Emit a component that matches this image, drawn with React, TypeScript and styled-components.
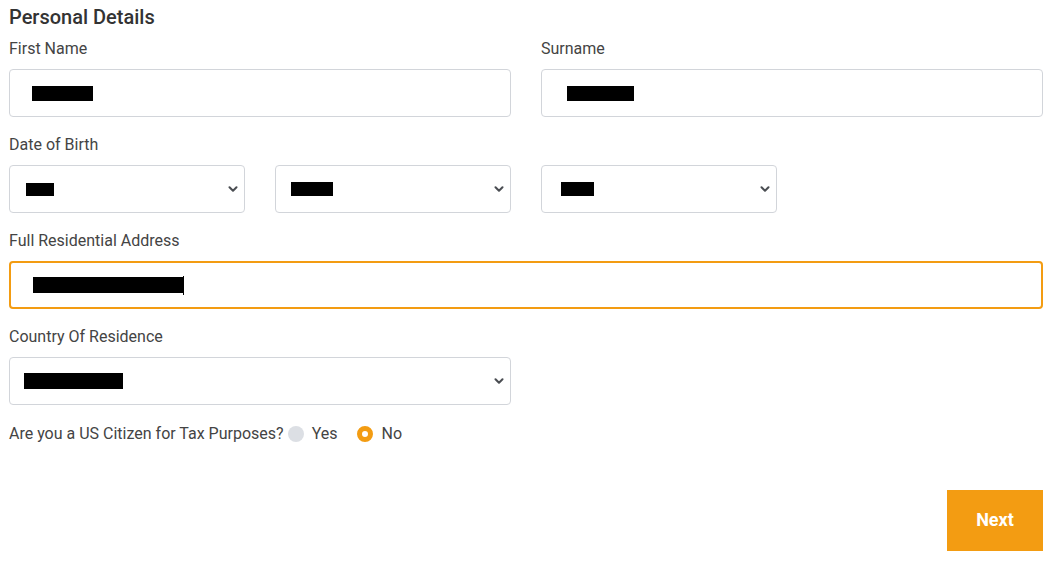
import React from "react";
import styled, { createGlobalStyle } from "styled-components";

const GlobalStyle = createGlobalStyle`
  html, body { margin: 0; padding: 0; background: #ffffff; }
  body { font-family: Roboto, "Liberation Sans", Arial, sans-serif; }
  * { box-sizing: border-box; }
`;

const Page = styled.div`
  padding: 5px 16px 0 9px;
  width: 1059px;
`;

const Heading = styled.h2`
  margin: 0 0 9px;
  font-size: 20px;
  line-height: 24px;
  font-weight: 500;
  color: #333333;
`;

const Row = styled.div`
  display: grid;
  grid-template-columns: repeat(12, 1fr);
  column-gap: 30px;
  width: 1034px;
`;

const Group = styled.div<{ $span: number; $flush?: boolean; $gap?: number }>`
  grid-column: span ${(p) => p.$span};
  margin-bottom: ${(p) => (p.$flush ? 0 : p.$gap ?? 17)}px;
`;

const Label = styled.label`
  display: block;
  font-size: 16px;
  line-height: 22px;
  color: #444444;
  margin-bottom: 9px;
`;

const Field = styled.div<{ $focus?: boolean }>`
  position: relative;
  display: flex;
  align-items: center;
  height: 48px;
  border: ${(p) => (p.$focus ? "2px solid #f39c12" : "1px solid #d2d5da")};
  border-radius: 4px;
  background: #ffffff;
  padding-left: ${(p) => (p.$focus ? "0" : "1px")};
`;

const Redaction = styled.span<{ $left: number; $w: number; $h: number }>`
  display: block;
  margin-left: ${(p) => p.$left}px;
  width: ${(p) => p.$w}px;
  height: ${(p) => p.$h}px;
  background: #000000;
`;

const Caret = styled.span`
  display: block;
  width: 1px;
  height: 19px;
  background: #000000;
`;

const Chevron = styled.svg`
  position: absolute;
  right: 6px;
  top: 50%;
  margin-top: -3px;
  width: 10px;
  height: 6px;
`;

const SelectArrow = () => (
  <Chevron viewBox="0 0 10 6">
    <path d="M1.5 1.2 L5 4.8 L8.5 1.2" fill="none" stroke="#4a4d52" strokeWidth="2" strokeLinecap="round" strokeLinejoin="round" />
  </Chevron>
);

const RadioRow = styled.div`
  display: flex;
  align-items: center;
  font-size: 16px;
  line-height: 22px;
  color: #444444;
`;

const Question = styled.span`
  margin-right: 4px;
`;

const RadioDot = styled.span<{ $checked?: boolean }>`
  display: inline-block;
  width: 16px;
  height: 16px;
  border-radius: 50%;
  box-sizing: border-box;
  background: ${(p) => (p.$checked ? "#ffffff" : "#dcdfe4")};
  border: ${(p) => (p.$checked ? "5px solid #f39c12" : "none")};
  margin-right: 8px;
`;

const RadioOption = styled.span`
  display: inline-flex;
  align-items: center;
  margin-right: 20px;
`;

const Actions = styled.div`
  display: flex;
  justify-content: flex-end;
  width: 1034px;
  margin-top: 45px;
`;

const NextButton = styled.button`
  width: 96px;
  height: 61px;
  border: none;
  border-radius: 0;
  padding: 0 0 2px;
  background: #f39c12;
  color: #ffffff;
  font-family: Roboto, "Liberation Sans", Arial, sans-serif;
  font-size: 18px;
  font-weight: 700;
  cursor: pointer;
`;

export default function App() {
  return (
    <>
      <GlobalStyle />
      <Page>
        <Heading>Personal Details</Heading>
        <Row>
          <Group $span={6}>
            <Label>First Name</Label>
            <Field>
              <Redaction $left={21} $w={61} $h={15} />
            </Field>
          </Group>
          <Group $span={6}>
            <Label>Surname</Label>
            <Field>
              <Redaction $left={24} $w={67} $h={15} />
            </Field>
          </Group>
        </Row>
        <Row>
          <Group $span={12}>
            <Label>Date of Birth</Label>
            <Row>
              <Group $span={3} $flush>
                <Field>
                  <Redaction $left={15} $w={28} $h={13} />
                  <SelectArrow />
                </Field>
              </Group>
              <Group $span={3} $flush>
                <Field>
                  <Redaction $left={14} $w={42} $h={14} />
                  <SelectArrow />
                </Field>
              </Group>
              <Group $span={3} $flush>
                <Field>
                  <Redaction $left={18} $w={33} $h={14} />
                  <SelectArrow />
                </Field>
              </Group>
            </Row>
          </Group>
        </Row>
        <Row>
          <Group $span={12}>
            <Label>Full Residential Address</Label>
            <Field $focus>
              <Redaction $left={22} $w={150} $h={16} />
              <Caret />
            </Field>
          </Group>
        </Row>
        <Row>
          <Group $span={6} $gap={18}>
            <Label>Country Of Residence</Label>
            <Field>
              <Redaction $left={13} $w={99} $h={16} />
              <SelectArrow />
            </Field>
          </Group>
        </Row>
        <RadioRow>
          <Question>Are you a US Citizen for Tax Purposes?</Question>
          <RadioOption>
            <RadioDot />
            Yes
          </RadioOption>
          <RadioOption>
            <RadioDot $checked />
            No
          </RadioOption>
        </RadioRow>
        <Actions>
          <NextButton>Next</NextButton>
        </Actions>
      </Page>
    </>
  );
}
